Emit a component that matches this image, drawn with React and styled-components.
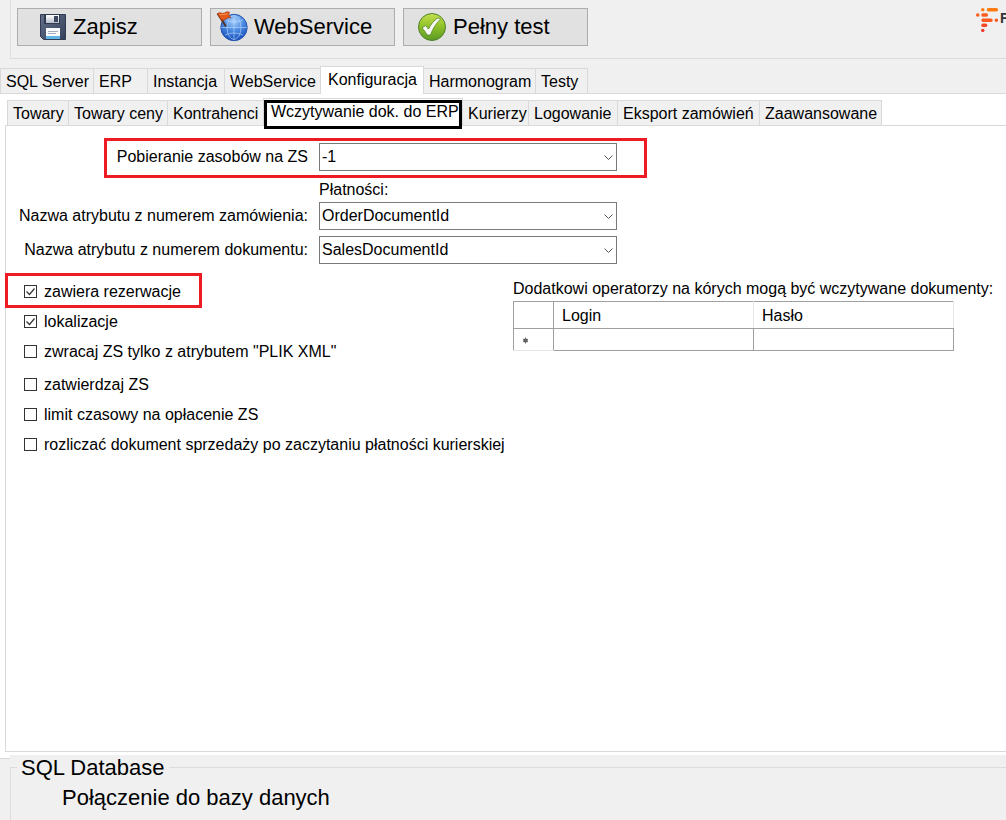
import { useState } from 'react'
import styled, { createGlobalStyle } from 'styled-components'

const GlobalStyle = createGlobalStyle`
  * {
    box-sizing: border-box;
  }

  body {
    margin: 0;
    background: #F0F0F0;
    color: #000000;
    font-family: 'Liberation Sans', Arial, sans-serif;
    font-size: 16px;
    line-height: 20px;
    overflow-x: hidden;
  }

  button, select, input {
    font: inherit;
    color: inherit;
  }
`

const Window = styled.div`
  min-height: 100vh;
  display: flex;
  flex-direction: column;
`

const Toolbar = styled.header`
  display: flex;
  gap: 8px;
  margin-left: 10px;
  margin-bottom: 7px;
  padding: 8px 0 12px 6px;
  border-left: 1px solid #DCDCDC;
  border-bottom: 1px solid #DCDCDC;
`

const ToolButton = styled.button`
  width: 185px;
  height: 38px;
  display: flex;
  align-items: center;
  gap: 6px;
  padding: 0 0 0 ${props => props.$indent}px;
  background: #E1E1E1;
  border: 1px solid #ADADAD;
  font-size: 22px;
  line-height: 24px;
  white-space: nowrap;
`

const Brand = styled.div`
  margin-left: auto;
  display: flex;
  align-items: flex-start;
  height: 38px;
`

const BrandName = styled.span`
  width: 6px;
  overflow: hidden;
  font-size: 14px;
  font-weight: 700;
  color: #333333;
`

const TabList = styled.div`
  flex: none;
  height: 28px;
  display: flex;
  align-items: flex-end;
  padding-left: ${props => props.$inset || 0}px;
  box-shadow: inset 0 -1px #D9D9D9;
`

const Tab = styled.button`
  position: relative;
  flex: none;
  width: ${props => props.$width}px;
  height: ${props => props.$active ? 28 : 26}px;
  padding: ${props => props.$active ? '0 0 2px 7px' : '1px 0 0 5px'};
  background: ${props => props.$active ? '#FFFFFF' : '#F0F0F0'};
  border: 1px solid #D9D9D9;
  border-right-width: ${props => props.$last || props.$active ? 1 : 0}px;
  border-bottom-width: ${props => props.$active ? 0 : 1}px;
  border-left-width: ${props => props.$after ? 0 : 1}px;
  text-align: left;
  white-space: nowrap;
`

const TabMark = styled.span`
  position: absolute;
  top: 1px;
  right: 0;
  bottom: -3px;
  left: 0;
  border: 3px solid #000000;
  pointer-events: none;
`

const Page = styled.main`
  flex: 1;
  display: flex;
  flex-direction: column;
  padding: 4px 0 3px 5px;
  background: #FFFFFF;
`

const Panel = styled.section`
  flex: 1;
  padding-top: 17px;
  border-left: 1px solid #D9D9D9;
  border-bottom: 1px solid #D9D9D9;
`

const Marked = styled.div`
  position: relative;
  width: fit-content;

  &::after {
    content: '';
    position: absolute;
    inset: ${props => props.$inset};
    border: 3px solid #ED1C24;
    pointer-events: none;
  }
`

const Field = styled.div`
  display: grid;
  grid-template-columns: 302px 298px;
  column-gap: 11px;
  margin-bottom: ${props => props.$gap || 0}px;
`

const FieldLabel = styled.label`
  padding-top: 4px;
  text-align: right;
`

const FieldNote = styled.div`
  grid-column: 2;
  height: 31px;
  padding-top: 9px;
`

const SelectBox = styled.div`
  position: relative;

  svg {
    position: absolute;
    top: 12px;
    right: 4px;
    pointer-events: none;
  }
`

const Select = styled.select`
  display: block;
  appearance: none;
  width: 100%;
  height: 28px;
  padding: 0 20px 0 2px;
  background: #FFFFFF;
  border: 1px solid #7A7A7A;
  border-radius: 0;
`

const Columns = styled.div`
  display: flex;
  margin-top: 12px;
`

const Options = styled.div`
  flex: none;
  width: 507px;
`

const OptionGroup = styled.div`
  margin-bottom: 3px;
`

const Option = styled.label`
  width: fit-content;
  height: 30px;
  display: flex;
  align-items: center;
  gap: 7px;
  padding-left: 18px;
  white-space: nowrap;
`

const OptionText = styled.span`
  padding-top: 2px;
`

const CheckBox = styled.span`
  display: grid;

  > * {
    grid-area: 1 / 1;
  }

  svg {
    pointer-events: none;
  }
`

const CheckInput = styled.input`
  appearance: none;
  width: 13px;
  height: 13px;
  margin: 0;
  background: #FFFFFF;
  border: 1px solid #333333;
`

const Operators = styled.div`
  padding-top: 3px;
`

const OperatorsTitle = styled.div`
  margin-bottom: 2px;
  white-space: nowrap;
`

const Grid = styled.table`
  width: 441px;
  table-layout: fixed;
  border-collapse: collapse;
  border-top: 1px solid #A0A0A0;
  border-left: 1px solid #A0A0A0;
`

const GridHead = styled.th`
  width: ${props => props.$width}px;
  height: 27px;
  padding: 2px 8px 0;
  border-right: 1px solid ${props => props.$corner ? '#A0A0A0' : '#E5E5E5'};
  border-bottom: 1px solid #A0A0A0;
  font-weight: 400;
  text-align: left;
`

const GridCell = styled.td`
  height: 22px;
  padding: 0;
  border-right: 1px solid #A0A0A0;
  border-bottom: 1px solid #A0A0A0;
`

const RowMarker = styled.td`
  padding: 2px 0 0 8px;
  border-right: 1px solid #A0A0A0;
  border-bottom: 1px solid #E5E5E5;

  svg {
    display: block;
  }
`

const Footer = styled.footer`
  display: flex;
`

const Gutter = styled.div`
  width: 10px;
  height: 4px;
  background: #FFFFFF;
  border-bottom: 1px solid #D9D9D9;
`

const Group = styled.fieldset`
  flex: 1;
  margin: 0;
  padding: 0;
  border: 0 solid #DCDCDC;
  border-top-width: 1px;
  border-left-width: 1px;
  font-size: 22px;
  line-height: 24px;
`

const GroupTitle = styled.legend`
  margin-left: 6px;
  padding: 1px 4px 0;
`

const GroupBody = styled.div`
  height: 40px;
  padding: 6px 0 0 51px;
`

const SaveIcon = () => (
  <svg width="28" height="28" viewBox="0 0 28 28" aria-hidden="true">
    <defs>
      <linearGradient id="disk" x1="0" y1="0" x2="1" y2="1">
        <stop offset="0" stopColor="#66728A" />
        <stop offset="0.5" stopColor="#4C5872" />
        <stop offset="1" stopColor="#35405A" />
      </linearGradient>
      <linearGradient id="shutter" x1="0" y1="0" x2="0" y2="1">
        <stop offset="0" stopColor="#FFFFFF" />
        <stop offset="1" stopColor="#B8BECA" />
      </linearGradient>
    </defs>
    <path d="M1.5 1.5h25v25h-22l-3-3z" fill="url(#disk)" stroke="#303A50" />
    <path d="M5 2h16v9H5z" fill="#303B52" />
    <path d="M7 2h13v8H7z" fill="url(#shutter)" />
    <path d="M15 3h4v6h-4z" fill="#3D4962" />
    <path d="M7 15h14v11H7z" fill="#FAFBFD" />
    <path d="M7 23h14v3H7z" fill="#5FB5E8" />
    <path d="M9 18.5h10M9 20.5h8" stroke="#A6ABC0" />
  </svg>
)

const GlobeIcon = () => (
  <svg width="32" height="32" viewBox="0 0 32 32" aria-hidden="true">
    <defs>
      <radialGradient id="globe" cx="0.5" cy="0.25" r="0.75">
        <stop offset="0" stopColor="#A9D0FA" />
        <stop offset="0.5" stopColor="#4B8AE3" />
        <stop offset="1" stopColor="#184EB8" />
      </radialGradient>
    </defs>
    <circle cx="18" cy="16.5" r="13.2" fill="url(#globe)" stroke="#2455AE" />
    <g fill="none" stroke="#B9D8FB" strokeOpacity="0.6">
      <ellipse cx="18" cy="16.5" rx="7" ry="12" />
      <path d="M18 4v25M5 16.5h26M9 9q9 4 18 0M9 24q9-4 18 0" />
    </g>
    <path d="M1.5 2.5l8.5 13" stroke="#54301F" strokeWidth="1.8" />
    <path d="M1.5 2.5C4 .5 6 3.5 8.5 2s3-1.5 5-.6l-1 2.2L15 7c-3-1-4 0-5.500 1.200S7 9 5.500 9z" fill="#E65B19" stroke="#AE3C13" strokeWidth="0.8" />
    <path d="M3.500 3.500c2.500 0 4 .5 8-1" fill="none" stroke="#F99855" />
  </svg>
)

const CheckIcon = () => (
  <svg width="30" height="30" viewBox="0 0 30 30" aria-hidden="true">
    <defs>
      <linearGradient id="ok" x1="0" y1="0" x2="0" y2="1">
        <stop offset="0" stopColor="#C5E14F" />
        <stop offset="0.5" stopColor="#8DBF27" />
        <stop offset="1" stopColor="#5A9A25" />
      </linearGradient>
    </defs>
    <circle cx="15" cy="15" r="13.5" fill="url(#ok)" stroke="#4F8128" />
    <path d="M5 16l3.500-2.500L11.500 17C14 12 17 8.500 21 5.800l2.500 1.400C19 11.500 15.500 17 13.500 23H10c-1-2.500-3-5-5-7z" fill="#F7FAF2" stroke="#54812A" strokeWidth="0.8" />
  </svg>
)

const BrandIcon = () => (
  <svg width="24" height="26" viewBox="0 0 24 26" aria-hidden="true">
    <g fill="none" strokeWidth="3.4" strokeLinecap="round">
      <path d="M6.7 1.8h.1M12.4 1.8h8" stroke="#FF7A0F" />
      <path d="M1.700 7h.1M7 7h3.400" stroke="#FB5C1B" />
      <path d="M7 12.200h8M20.300 12.200h.1" stroke="#FA5A1D" />
      <path d="M7 17.300h2.600" stroke="#F44723" />
      <path d="M6.700 22.400h.1" stroke="#EF3A2B" />
    </g>
  </svg>
)

const mainTabs = [
  { title: 'SQL Server', width: 93 },
  { title: 'ERP', width: 54 },
  { title: 'Instancja', width: 77 },
  { title: 'WebService', width: 96 },
  { title: 'Konfiguracja', width: 104, active: true },
  { title: 'Harmonogram', width: 111, after: true },
  { title: 'Testy', width: 53, last: true }
]

const configTabs = [
  { title: 'Towary', width: 61 },
  { title: 'Towary ceny', width: 99 },
  { title: 'Kontrahenci', width: 96 },
  { title: 'Wczytywanie dok. do ERP', width: 200, active: true, marked: true },
  { title: 'Kurierzy', width: 65, after: true },
  { title: 'Logowanie', width: 89 },
  { title: 'Eksport zamówień', width: 142 },
  { title: 'Zaawansowane', width: 123, last: true }
]

const Tabs = ({ tabs, inset }) => (
  <TabList role="tablist" $inset={inset}>
    {tabs.map(tab => (
      <Tab
        key={tab.title}
        type="button"
        role="tab"
        aria-selected={Boolean(tab.active)}
        $width={tab.width}
        $active={tab.active}
        $after={tab.after}
        $last={tab.last}
      >
        {tab.title}
        {tab.marked ? <TabMark /> : null}
      </Tab>
    ))}
  </TabList>
)

const ComboField = ({ id, label, value, gap }) => (
  <Field $gap={gap}>
    <FieldLabel htmlFor={id}>{label}</FieldLabel>
    <SelectBox>
      <Select id={id} defaultValue={value}>
        <option>{value}</option>
      </Select>
      <svg width="9" height="6" viewBox="0 0 9 6" aria-hidden="true">
        <path d="M.5 .5l4 4 4-4" fill="none" stroke="#555555" />
      </svg>
    </SelectBox>
  </Field>
)

const CheckOption = ({ label, initial = false }) => {
  const [checked, setChecked] = useState(initial)

  return (
    <Option>
      <CheckBox>
        <CheckInput type="checkbox" checked={checked} onChange={() => setChecked(!checked)} />
        {
          checked
            ? (
              <svg width="13" height="13" viewBox="0 0 13 13" aria-hidden="true">
                <path d="M2.500 6.500l3 3 5-6" fill="none" stroke="#333333" strokeWidth="1.2" />
              </svg>
            )
            : null
        }
      </CheckBox>
      <OptionText>{label}</OptionText>
    </Option>
  )
}

const App = () => (
  <>
    <GlobalStyle />
    <Window>
      <Toolbar>
        <ToolButton type="button" $indent={21}><SaveIcon />Zapisz</ToolButton>
        <ToolButton type="button" $indent={5}><GlobeIcon />WebService</ToolButton>
        <ToolButton type="button" $indent={13}><CheckIcon />Pełny test</ToolButton>
        <Brand>
          <BrandIcon />
          <BrandName>F</BrandName>
        </Brand>
      </Toolbar>
      <Tabs tabs={mainTabs} />
      <Page>
        <Tabs tabs={configTabs} inset={2} />
        <Panel>
          <Marked $inset="-5px -30px -7px 98px">
            <ComboField id="resources" label="Pobieranie zasobów na ZS" value="-1" />
          </Marked>
          <Field>
            <FieldNote>Płatności:</FieldNote>
          </Field>
          <ComboField id="order" label="Nazwa atrybutu z numerem zamówienia:" value="OrderDocumentId" gap={6} />
          <ComboField id="document" label="Nazwa atrybutu z numerem dokumentu:" value="SalesDocumentId" />
          <Columns>
            <Options>
              <OptionGroup>
                <Marked $inset="-3px -21px -2px -1px">
                  <CheckOption label="zawiera rezerwacje" initial />
                </Marked>
                <CheckOption label="lokalizacje" initial />
                <CheckOption label={'zwracaj ZS tylko z atrybutem "PLIK XML"'} />
              </OptionGroup>
              <OptionGroup>
                <CheckOption label="zatwierdzaj ZS" />
                <CheckOption label="limit czasowy na opłacenie ZS" />
                <CheckOption label="rozliczać dokument sprzedaży po zaczytaniu płatności kurierskiej" />
              </OptionGroup>
            </Options>
            <Operators>
              <OperatorsTitle id="operators">Dodatkowi operatorzy na kórych mogą być wczytywane dokumenty:</OperatorsTitle>
              <Grid aria-labelledby="operators">
                <thead>
                  <tr>
                    <GridHead $width={40} $corner />
                    <GridHead $width={200}>Login</GridHead>
                    <GridHead $width={200}>Hasło</GridHead>
                  </tr>
                </thead>
                <tbody>
                  <tr>
                    <RowMarker>
                      <svg width="7" height="7" viewBox="0 0 7 7" aria-hidden="true">
                        <circle cx="3.5" cy="3.5" r="2" fill="#444444" />
                        <path d="M3.5 .5v6M1 2l5 3M6 2l-5 3" stroke="#666666" />
                      </svg>
                    </RowMarker>
                    <GridCell />
                    <GridCell />
                  </tr>
                </tbody>
              </Grid>
            </Operators>
          </Columns>
        </Panel>
      </Page>
      <Footer>
        <Gutter />
        <Group>
          <GroupTitle>SQL Database</GroupTitle>
          <GroupBody>Połączenie do bazy danych</GroupBody>
        </Group>
      </Footer>
    </Window>
  </>
)

export default App
